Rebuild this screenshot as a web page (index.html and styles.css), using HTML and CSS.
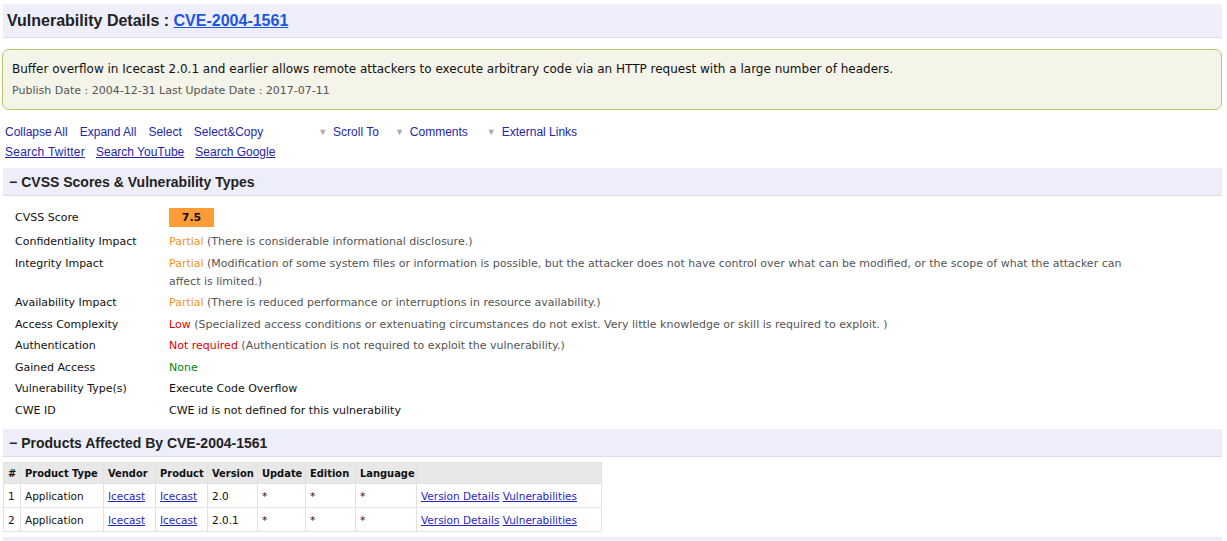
FILE: index.html
```html
<!DOCTYPE html>
<html>
<head>
<meta charset="utf-8">
<link rel="stylesheet" href="styles.css">
</head>
<body>
<div class="page">
  <h1 class="title-bar">Vulnerability Details :&nbsp;<a href="#" class="cve-link">CVE-2004-1561</a></h1>

  <div class="summary">
    <div class="summary-text">Buffer overflow in Icecast 2.0.1 and earlier allows remote attackers to execute arbitrary code via an HTTP request with a large number of headers.</div>
    <div class="summary-dates">Publish Date : 2004-12-31 Last Update Date : 2017-07-11</div>
  </div>

  <div class="toolbar">
    <div class="tool-row">
      <a class="tool" href="#">Collapse All</a>
      <a class="tool" href="#">Expand All</a>
      <a class="tool" href="#">Select</a>
      <a class="tool" href="#">Select&amp;Copy</a>
      <span class="dropdowns">
        <a class="drop" href="#"><span class="tri">▼</span>Scroll To</a>
        <a class="drop" href="#"><span class="tri">▼</span>Comments</a>
        <a class="drop" href="#"><span class="tri">▼</span>External Links</a>
      </span>
    </div>
    <div class="tool-row">
      <a class="tool ul" href="#">Search Twitter</a>
      <a class="tool ul" href="#">Search YouTube</a>
      <a class="tool ul" href="#">Search Google</a>
    </div>
  </div>

  <h2 class="section-bar"><span class="minus">−</span>CVSS Scores &amp; Vulnerability Types</h2>

  <table class="cvss">
    <tr class="score-row"><th>CVSS Score</th><td><span class="score">7.5</span></td></tr>
    <tr><th>Confidentiality Impact</th><td><span class="partial">Partial</span> <span class="note">(There is considerable informational disclosure.)</span></td></tr>
    <tr><th>Integrity Impact</th><td><span class="partial">Partial</span> <span class="note">(Modification of some system files or information is possible, but the attacker does not have control over what can be modified, or the scope of what the attacker can affect is limited.)</span></td></tr>
    <tr><th>Availability Impact</th><td><span class="partial">Partial</span> <span class="note">(There is reduced performance or interruptions in resource availability.)</span></td></tr>
    <tr><th>Access Complexity</th><td><span class="bad">Low</span> <span class="note">(Specialized access conditions or extenuating circumstances do not exist. Very little knowledge or skill is required to exploit. )</span></td></tr>
    <tr><th>Authentication</th><td><span class="bad">Not required</span> <span class="note">(Authentication is not required to exploit the vulnerability.)</span></td></tr>
    <tr><th>Gained Access</th><td><span class="good">None</span></td></tr>
    <tr><th>Vulnerability Type(s)</th><td>Execute Code Overflow</td></tr>
    <tr><th>CWE ID</th><td>CWE id is not defined for this vulnerability</td></tr>
  </table>

  <h2 class="section-bar products-bar"><span class="minus">−</span>Products Affected By CVE-2004-1561</h2>

  <table class="products">
    <colgroup>
      <col class="c-num"><col class="c-type"><col class="c-vendor"><col class="c-product"><col class="c-version"><col class="c-update"><col class="c-edition"><col class="c-lang"><col class="c-links">
    </colgroup>
    <tr class="head">
      <th>#</th><th>Product Type</th><th>Vendor</th><th>Product</th><th>Version</th><th>Update</th><th>Edition</th><th>Language</th><th></th>
    </tr>
    <tr>
      <td>1</td><td>Application</td><td><a href="#">Icecast</a></td><td><a href="#">Icecast</a></td><td>2.0</td><td>*</td><td>*</td><td>*</td>
      <td><a href="#">Version Details</a> <a href="#">Vulnerabilities</a></td>
    </tr>
    <tr>
      <td>2</td><td>Application</td><td><a href="#">Icecast</a></td><td><a href="#">Icecast</a></td><td>2.0.1</td><td>*</td><td>*</td><td>*</td>
      <td><a href="#">Version Details</a> <a href="#">Vulnerabilities</a></td>
    </tr>
  </table>

  <div class="section-bar next-bar"></div>
</div>
</body>
</html>
```

FILE: styles.css
```css
html, body {
  margin: 0;
  padding: 0;
  background: #ffffff;
}
body {
  font-family: "DejaVu Sans", Verdana, sans-serif;
  font-size: 12px;
  color: #222;
}
.page {
  padding: 4px 5px 0 2px;
}
.title-bar {
  margin: 0 0 0 1px;
  height: 34px;
  box-sizing: border-box;
  display: flex;
  align-items: center;
  padding-left: 4px;
  background: #efeffb;
  border-bottom: 1px solid #dcdcee;
  font-family: "Liberation Sans", Arial, sans-serif;
  font-weight: bold;
  font-size: 16px;
  color: #222;
}
.cve-link {
  color: #1a55e6;
  text-decoration: underline;
}
.summary {
  margin-top: 11px;
  height: 61px;
  box-sizing: border-box;
  border: 1px solid #b8c865;
  border-radius: 7px;
  background: #f4f4e9;
  padding: 11px 9px 0 9px;
}
.summary-text {
  font-size: 12px;
  color: #111;
  line-height: 17px;
}
.summary-dates {
  margin-top: 5px;
  font-size: 11px;
  color: #555;
  line-height: 16px;
}
.toolbar {
  margin-top: 12px;
  padding-left: 3px;
  font-family: "Liberation Sans", Arial, sans-serif;
  font-size: 12px;
}
.tool-row {
  display: flex;
  align-items: center;
  height: 20px;
}
.tool {
  color: #2626a6;
  text-decoration: none;
  margin-right: 12px;
}
.tool.ul {
  text-decoration: underline;
  margin-right: 11px;
}
.tool.ul:first-child {
  letter-spacing: 0.25px;
}
.dropdowns {
  display: flex;
  margin-left: 43px;
}
.drop {
  color: #2626a6;
  text-decoration: none;
  margin-right: 16px;
}
.drop:nth-child(2) {
  margin-right: 19px;
}
.tri {
  color: #aaa;
  font-size: 9px;
  margin-right: 6px;
  position: relative;
  top: -1px;
}
.section-bar {
  margin: 6px 0 0 1px;
  height: 28px;
  box-sizing: border-box;
  display: flex;
  align-items: center;
  padding-left: 6px;
  padding-top: 1px;
  background: #eeeefb;
  border-bottom: 1px solid #dcdcee;
  font-family: "Liberation Sans", Arial, sans-serif;
  font-weight: bold;
  font-size: 14px;
  color: #222;
}
.minus {
  margin-right: 4px;
}
.cvss {
  border-collapse: collapse;
  margin: 11px 0 0 8px;
  font-size: 11px;
}
.cvss th {
  text-align: left;
  font-weight: normal;
  vertical-align: top;
  width: 149px;
  padding: 2px 5px 1.5px 5px;
  line-height: 18px;
  color: #111;
}
.cvss td {
  vertical-align: top;
  padding: 2px 0 1.5px 0;
  line-height: 18px;
  max-width: 972px;
  color: #111;
}
.cvss tr.score-row th, .cvss tr.score-row td {
  padding-top: 1px;
  padding-bottom: 4px;
  line-height: 19px;
}
.score {
  display: inline-block;
  vertical-align: top;
  width: 45px;
  height: 19px;
  line-height: 19px;
  text-align: center;
  background: #ff9c38;
  font-weight: bold;
  font-size: 11px;
  color: #111;
}
.partial { color: #f0961e; }
.bad { color: #e00000; }
.good { color: #008a00; }
.note { color: #555; }
.products-bar {
  margin-top: 8px;
}
.products {
  border-collapse: collapse;
  margin: 5px 0 0 1px;
  font-size: 10.5px;
  table-layout: fixed;
  width: 598px;
}
.c-num { width: 17px; }
.c-type { width: 83px; }
.c-vendor { width: 52px; }
.c-product { width: 52px; }
.c-version { width: 50px; }
.c-update { width: 48px; }
.c-edition { width: 50px; }
.c-lang { width: 61px; }
.c-links { width: 185px; }
.products th, .products td {
  border: 1px solid #e2e2e2;
  height: 24px;
  box-sizing: border-box;
  padding: 0 4px;
  text-align: left;
  white-space: nowrap;
  color: #111;
}
.products tr.head th {
  background: #e8e8e8;
  font-family: "DejaVu Sans Condensed", "DejaVu Sans", sans-serif;
  font-weight: bold;
  font-size: 11px;
  height: 21px;
}
.products a {
  color: #2626c0;
}
.next-bar {
  margin-top: 5px;
  height: 6px;
  border-bottom: none;
}
```
